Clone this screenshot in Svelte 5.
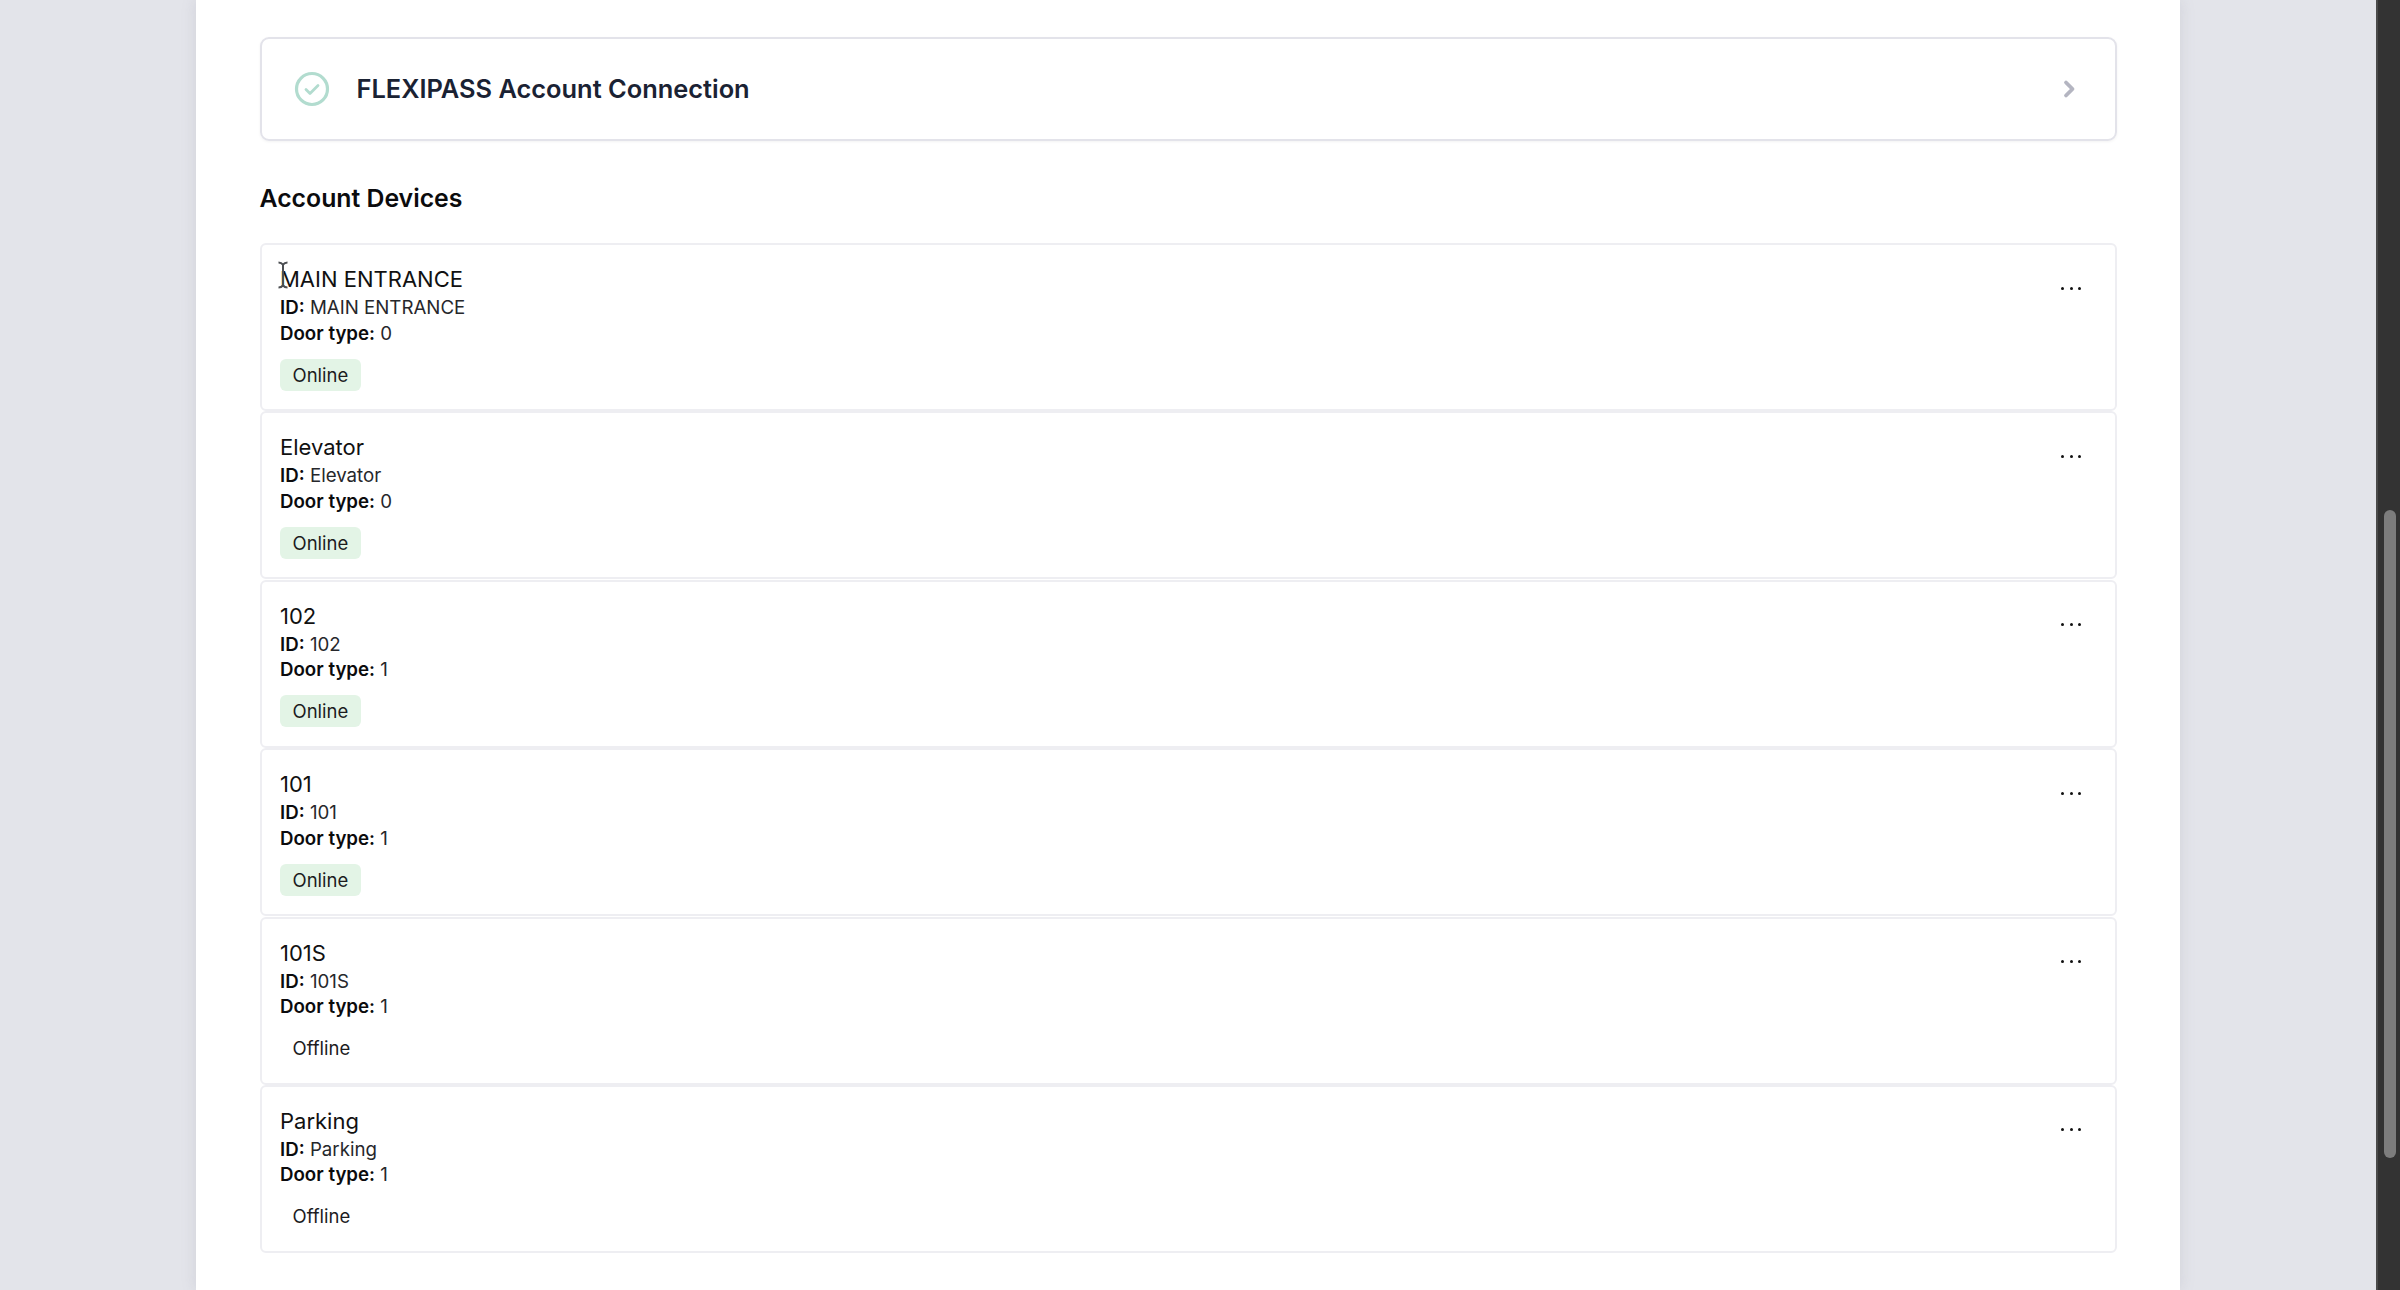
<script>
	const devices = [
		{ name: 'MAIN ENTRANCE', type: 0, online: true },
		{ name: 'Elevator', type: 0, online: true },
		{ name: '102', type: 1, online: true },
		{ name: '101', type: 1, online: true },
		{ name: '101S', type: 1, online: false },
		{ name: 'Parking', type: 1, online: false }
	];
</script>

<div class="window">
	<main class="page">
		<section class="panel">
			<div class="connection">
				<svg class="check" width="36" height="36" viewBox="0 0 36 36" fill="none">
					<circle cx="18" cy="18" r="15.500" stroke="#b2dccf" stroke-width="3.200" />
					<path d="M12 18.500l4 4 8-8" stroke="#b2dccf" stroke-width="2.800" stroke-linecap="round" stroke-linejoin="round" />
				</svg>
				<span class="connection-title">FLEXIPASS Account Connection</span>
				<svg class="chevron" width="14" height="20" viewBox="0 0 14 20" fill="none">
					<path d="M3 3.500l6.500 6.500-6.500 6.500" stroke="#b4b5c1" stroke-width="3.800" stroke-linecap="round" stroke-linejoin="round" />
				</svg>
			</div>

			<h2>Account Devices</h2>

			<ul class="devices">
				{#each devices as device, i}
					<li class="device">
						<div class="info">
							<div class="name">{device.name}</div>
							<div class="line"><b>ID:</b> {device.name}</div>
							<div class="line"><b>Door type:</b> {device.type}</div>
							<span class="badge" class:online={device.online}>{device.online ? 'Online' : 'Offline'}</span>
						</div>
						<button class="more" aria-label="More">
							<i></i><i></i><i></i>
						</button>
						{#if i === 0}
							<svg class="ibeam" width="12" height="28" viewBox="0 0 12 28" fill="none">
								<path d="M1.500 1.500c2.500 0 3.500.8 4.500 2.200 1-1.400 2-2.200 4.500-2.200M6 3.700v20.600M1.500 26.500c2.500 0 3.500-.8 4.500-2.200 1 1.400 2 2.200 4.500 2.200" stroke="#4c4f53" stroke-width="2" />
							</svg>
						{/if}
					</li>
				{/each}
			</ul>
		</section>
	</main>
	<div class="scrollbar"><div class="thumb"></div></div>
</div>

<style>
	:global(body) {
		margin: 0;
		font-family: Inter, 'Liberation Sans', sans-serif;
	}

	.window {
		display: flex;
		height: 1290px;
		overflow: hidden;
		background: #e3e4ea;
	}

	.page {
		flex: 1;
		padding-left: 196px;
	}

	.panel {
		width: 1984px;
		height: 1290px;
		box-sizing: border-box;
		padding: 37px 63px 0 63.500px;
		background: #fff;
		box-shadow: 0 0 14px rgba(120, 122, 140, 0.18);
	}

	.connection {
		display: flex;
		align-items: center;
		height: 104px;
		box-sizing: border-box;
		padding: 0 38px 0 32px;
		border: 2px solid #e3e3ea;
		border-radius: 9px;
		box-shadow: 0 1px 3px rgba(0, 0, 0, 0.05);
	}

	.connection-title {
		flex: 1;
		margin: -2px 0 0 27px;
		font-size: 25.400px;
		font-weight: 600;
		color: #1a2233;
	}

	h2 {
		margin: 41px 0 29px;
		font-size: 24.800px;
		line-height: 32px;
		font-weight: 600;
		color: #0b0b0d;
	}

	.devices {
		display: flex;
		flex-direction: column;
		gap: 0.400px;
		margin: 0;
		padding: 0;
		list-style: none;
	}

	.device {
		position: relative;
		display: flex;
		justify-content: space-between;
		height: 168px;
		box-sizing: border-box;
		padding: 19px 34px 0 18.500px;
		border: 2px solid #eeeef2;
		border-radius: 6px;
	}

	.name {
		font-size: 22px;
		line-height: 31px;
		color: #111;
	}

	.line {
		font-size: 18.700px;
		line-height: 25.500px;
		color: #26272b;
	}

	.line b {
		font-weight: 600;
		color: #0b0b0d;
	}

	.badge {
		display: inline-block;
		margin-top: 12.500px;
		padding: 0 12.500px;
		font-size: 18.500px;
		line-height: 32px;
		border-radius: 6px;
		color: #1c1c1e;
	}

	.badge.online {
		background: #e3f4e6;
	}

	.more {
		display: flex;
		gap: 5.500px;
		height: 3px;
		margin-top: 22.500px;
		padding: 0;
		border: 0;
		background: none;
	}

	.more i {
		width: 3px;
		height: 3px;
		border-radius: 50%;
		background: #111;
	}

	.ibeam {
		position: absolute;
		left: 15px;
		top: 16px;
	}

	.scrollbar {
		width: 24px;
		box-sizing: border-box;
		padding: 510px 4px 0 6px;
		background: #333;
		border-left: 2px solid #4a4a4a;
	}

	.thumb {
		height: 648px;
		border-radius: 7px;
		background: #7d7d7d;
	}
</style>
